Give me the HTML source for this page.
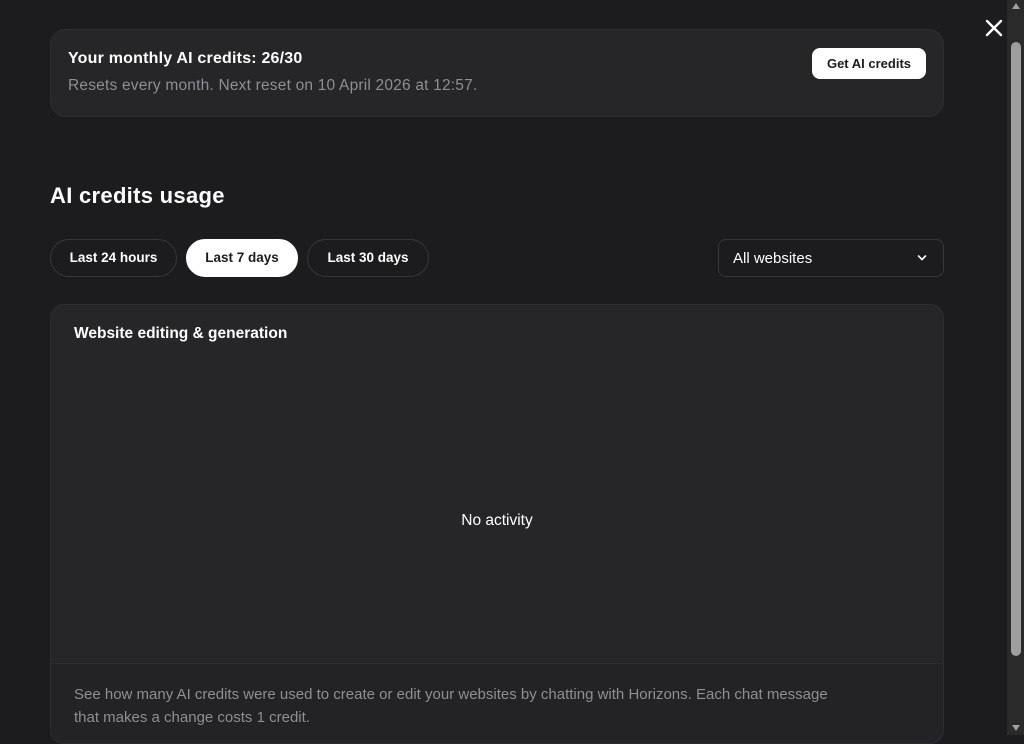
<!DOCTYPE html>
<html><head><meta charset="utf-8"><style>
*{box-sizing:border-box;margin:0;padding:0}
html,body{width:1024px;height:735px;overflow:hidden;background:#1c1c1f;font-family:"Liberation Sans",sans-serif;color:#fff}
.abs{position:absolute}
.card{left:50px;top:29px;width:894px;height:88px;background:#262629;border:1px solid #2e2e32;border-radius:16px}
.t1{left:68px;top:50px;font-size:16px;font-weight:bold;letter-spacing:0.2px}
.t2{left:68px;top:77px;font-size:15.5px;color:#8e8e93;letter-spacing:0.2px}
.btn{left:812px;top:48px;width:114px;height:31px;background:#fff;color:#1c1c1f;border-radius:8px;font-size:13px;font-weight:bold;text-align:center;line-height:31px}
.x{left:984px;top:18px;width:20px;height:20px}
h2{position:absolute;left:50px;top:183px;font-size:22px;font-weight:bold;letter-spacing:0.3px}
.pill{top:239px;height:38px;border:1px solid #38383c;border-radius:19px;font-size:13.5px;font-weight:bold;line-height:36px;text-align:center}
.sel{left:718px;top:239px;width:226px;height:38px;border:1px solid #38383c;border-radius:8px;font-size:15px;line-height:37px;padding-left:14px}
.chart{left:50px;top:304px;width:894px;height:440px;background:#262629;border:1px solid #2e2e32;border-radius:14px;overflow:hidden}
.foot{position:absolute;left:0;top:358px;width:100%;height:90px;background:#232326;border-top:1px solid #2e2e32}
.sb{left:1007px;top:0;width:17px;height:735px;background:#2a2a2a}
.th{left:1011px;top:42px;width:10px;height:614px;background:#9e9e9e;border-radius:5px}
</style></head><body>
<div class="abs card"></div>
<div class="abs t1">Your monthly AI credits: 26/30</div>
<div class="abs t2">Resets every month. Next reset on 10 April 2026 at 12:57.</div>
<div class="abs btn">Get AI credits</div>
<svg class="abs x" viewBox="0 0 20 20"><path d="M3 3L17 17M17 3L3 17" stroke="#fff" stroke-width="2.4" stroke-linecap="round"/></svg>
<h2>AI credits usage</h2>
<div class="abs pill" style="left:50px;width:127px">Last 24 hours</div>
<div class="abs pill" style="left:186px;width:112px;background:#fff;color:#1c1c1f;border-color:#fff">Last 7 days</div>
<div class="abs pill" style="left:307px;width:122px">Last 30 days</div>
<div class="abs sel">All websites<svg style="position:absolute;right:16px;top:14px" width="10" height="8" viewBox="0 0 10 8"><path d="M1.5 2L5 5.5L8.5 2" stroke="#fff" stroke-width="1.6" fill="none" stroke-linecap="round"/></svg></div>
<div class="abs chart">
<div style="position:absolute;left:23px;top:20px;font-size:15.5px;font-weight:bold">Website editing &amp; generation</div>
<div style="position:absolute;left:0;width:100%;top:207px;text-align:center;font-size:15.5px">No activity</div>
<div class="foot"><div style="padding:19px 23px 0;font-size:15px;line-height:23px;color:#8e8e93;width:815px">See how many AI credits were used to create or edit your websites by chatting with Horizons. Each chat message that makes a change costs 1 credit.</div></div>
</div>
<div class="abs sb"></div>
<div class="abs th"></div>
<svg class="abs" style="left:1011px;top:2px" width="10" height="8"><path d="M5 1L9 7H1Z" fill="#9e9e9e"/></svg>
<svg class="abs" style="left:1011px;top:724px" width="10" height="8"><path d="M5 7L9 1H1Z" fill="#9e9e9e"/></svg>
</body></html>
